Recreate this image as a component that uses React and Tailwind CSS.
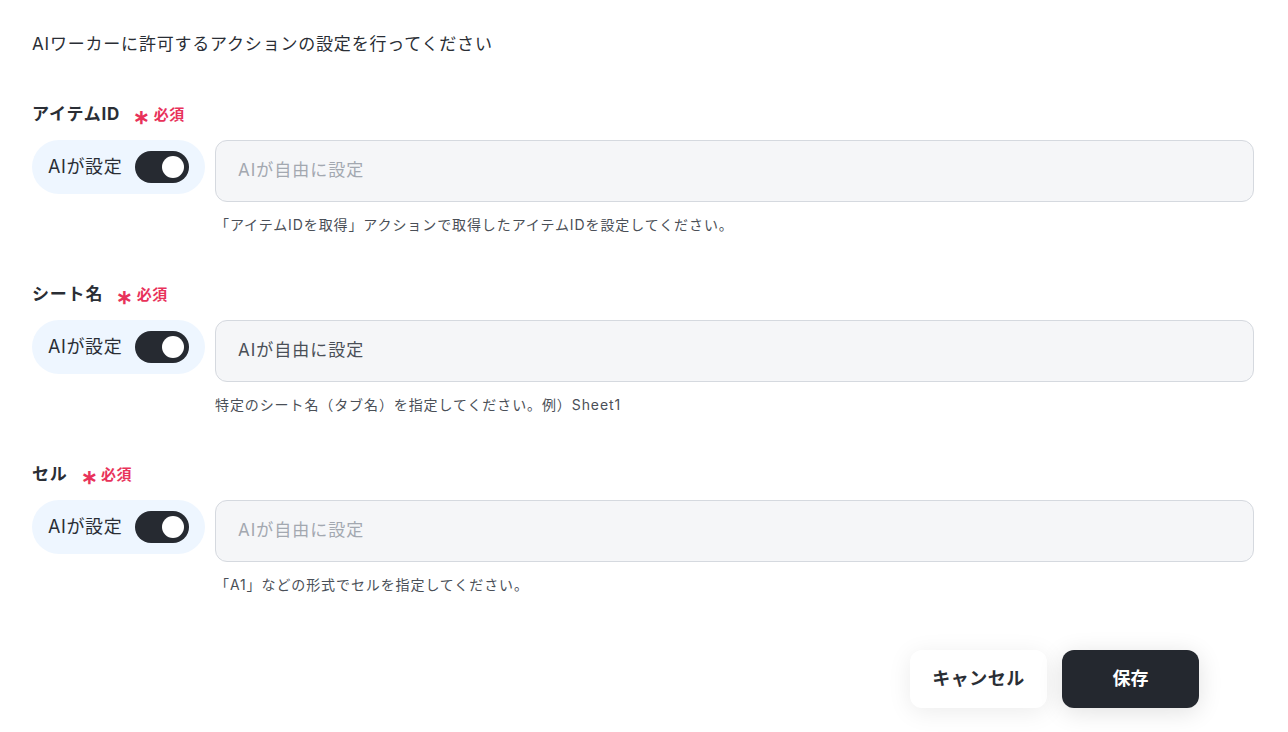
const fields = [
  {
    label: 'アイテムID',
    value: '',
    help: '「アイテムIDを取得」アクションで取得したアイテムIDを設定してください。',
  },
  {
    label: 'シート名',
    value: 'AIが自由に設定',
    help: '特定のシート名（タブ名）を指定してください。例）Sheet1',
  },
  {
    label: 'セル',
    value: '',
    help: '「A1」などの形式でセルを指定してください。',
  },
]

function Toggle() {
  return (
    <span className="relative inline-block h-8 w-[54px] rounded-full bg-[#262a31]">
      <span className="absolute right-[5px] top-[5px] h-[22px] w-[22px] rounded-full bg-white" />
    </span>
  )
}

function Field({ label, value, help }) {
  return (
    <section>
      <div className="flex h-6 items-center">
        <span className="text-[17px] font-bold tracking-[0.8px] text-[#2a2e35]">{label}</span>
        <span className="ml-[13px] flex items-center gap-[3px] text-[15px] font-bold tracking-[0.5px] text-[#e8325a]">
          <span className="mt-1 text-xl leading-none">∗</span>
          必須
        </span>
      </div>
      <div className="mt-[13px] flex items-start gap-[10px]">
        <div className="flex h-[54px] w-[173px] shrink-0 items-center justify-between rounded-full bg-[#eef6ff] pl-4 pr-4">
          <span className="text-lg tracking-[0.6px] text-[#2a2e35]">AIが設定</span>
          <Toggle />
        </div>
        <div className="flex h-[62px] flex-1 items-center rounded-xl border border-[#d5d9df] bg-[#f5f6f8] pl-[22px]">
          {value ? (
            <span className="text-[17px] tracking-[1px] text-[#4a4f57]">{value}</span>
          ) : (
            <span className="text-[17px] tracking-[1px] text-[#a3a8b0]">AIが自由に設定</span>
          )}
        </div>
      </div>
      <p className="ml-[183px] mt-[13px] text-sm leading-5 tracking-[0.9px] text-[#4a4f57]">{help}</p>
    </section>
  )
}

export default function App() {
  return (
    <main
      className="min-h-screen bg-white pl-8 pr-[34px] pt-8"
      style={{ fontFamily: "Inter, 'Noto Sans CJK JP', sans-serif" }}
    >
      <h1 className="text-[17px] leading-6 tracking-[0.8px] text-[#2a2e35]">
        AIワーカーに許可するアクションの設定を行ってください
      </h1>
      <div className="mt-[47px] flex flex-col gap-[48px]">
        {fields.map((f) => (
          <Field key={f.label} {...f} />
        ))}
      </div>
      <div className="mr-[55px] mt-[55px] flex justify-end gap-[15px]">
        <button className="h-[58px] w-[137px] rounded-xl bg-white text-lg font-bold tracking-[0.5px] text-[#2a2e35] shadow-[0_4px_24px_rgba(0,0,0,0.08)]">
          キャンセル
        </button>
        <button className="h-[58px] w-[137px] rounded-xl bg-[#24282f] text-lg font-bold text-white shadow-[0_4px_24px_rgba(0,0,0,0.12)]">
          保存
        </button>
      </div>
    </main>
  )
}
